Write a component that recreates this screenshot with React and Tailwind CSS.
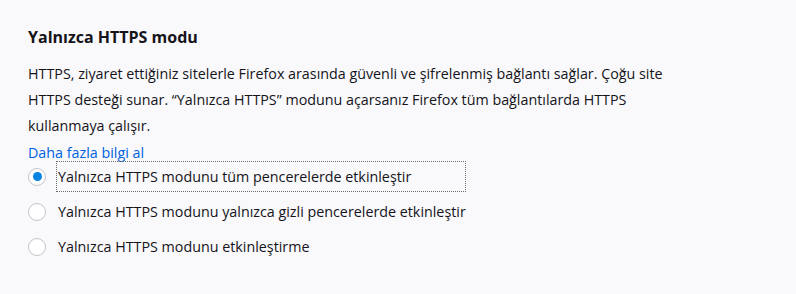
function Radio({checked,label,focus}){
return <label className="flex items-center h-[35px]">
<span className="w-[18px] h-[18px] rounded-full border border-[#c4c4cc] bg-white flex items-center justify-center shrink-0">
{checked && <span className="w-[9px] h-[9px] rounded-full bg-[#0a84e0]"></span>}
</span>
<span className={"ml-[11px] pl-[1px] h-[29px] flex items-center "+(focus?"outline outline-1 outline-dotted outline-[#6b6b6b] w-[408px]":"")}>{label}</span>
</label>}
export default function App(){
return <div className="w-[796px] h-[294px] bg-[#f9f9fb] text-[#15141a] pl-[28px] pt-[25px]" style={{fontFamily:"'Open Sans', sans-serif"}}>
<h1 className="text-[16px] font-bold leading-[24px]">Yalnızca HTTPS modu</h1>
<p className="mt-[12px] text-[14.3px] leading-[26px] w-[650px]">HTTPS, ziyaret ettiğiniz sitelerle Firefox arasında güvenli ve şifrelenmiş bağlantı sağlar. Çoğu site HTTPS desteği sunar. “Yalnızca HTTPS” modunu açarsanız Firefox tüm bağlantılarda HTTPS kullanmaya çalışır.</p>
<a className="block text-[14.3px] leading-[26px] text-[#0061e0] mt-[1px]">Daha fazla bilgi al</a>
<div className="text-[14.3px] -mt-[7px]">
<Radio checked focus label="Yalnızca HTTPS modunu tüm pencerelerde etkinleştir"/>
<Radio label="Yalnızca HTTPS modunu yalnızca gizli pencerelerde etkinleştir"/>
<Radio label="Yalnızca HTTPS modunu etkinleştirme"/>
</div>
</div>}
